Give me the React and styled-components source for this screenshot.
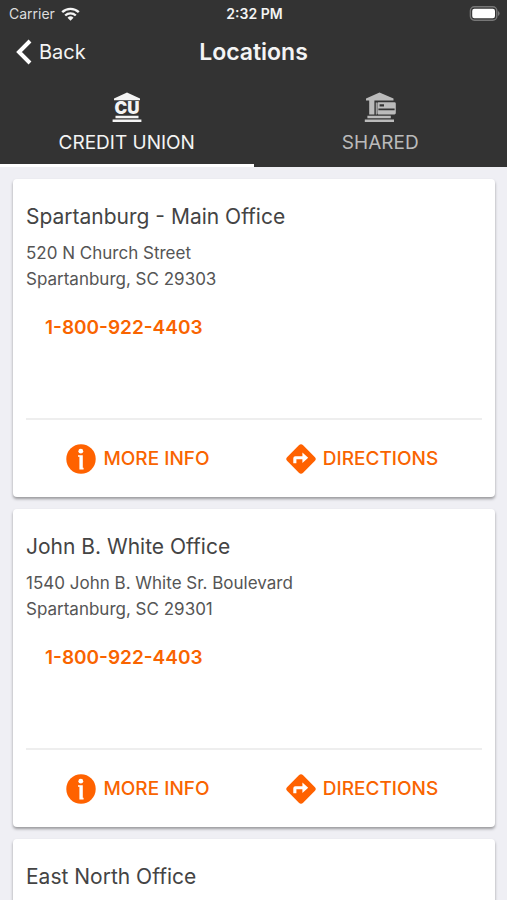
import React, { useState } from 'react'
import styled, { createGlobalStyle } from 'styled-components'

const GlobalStyle = createGlobalStyle`
	* {
		box-sizing: border-box;
	}

	body {
		margin: 0;
		background: #efeff4;
		color: #444;
		font-family: Inter, 'Liberation Sans', sans-serif;
	}

	button {
		border: none;
		padding: 0;
		background: none;
		color: inherit;
		font: inherit;
		cursor: pointer;
	}
`

const Screen = styled.div`
	display: flex;
	flex-direction: column;
	height: 100vh;
`

const Header = styled.header`
	flex: none;
	background: #333;
	color: #f4f4f4;
`

const StatusBar = styled.div`
	display: grid;
	grid-template-columns: 1fr auto 1fr;
	align-items: center;
	height: 27px;
	padding: 0 7px 0 9px;
	font-size: 14px;
`

const Carrier = styled.span`
	display: flex;
	align-items: center;
	gap: 6px;
	color: #ddd;
`

const Clock = styled.span`
	font-weight: 600;
`

const Battery = styled.svg`
	justify-self: end;
`

const NavBar = styled.div`
	display: grid;
	grid-template-columns: 1fr auto 1fr;
	align-items: center;
	height: 50px;
	padding: 0 16px;
`

const BackButton = styled.button`
	display: flex;
	align-items: center;
	justify-self: start;
	gap: 7px;
	font-size: 20px;
`

const Title = styled.h1`
	margin: 0;
	font-size: 23px;
	font-weight: 600;
	line-height: 28px;
`

const Tabs = styled.div`
	display: flex;
`

const Tab = styled.button`
	display: flex;
	flex: 1;
	flex-direction: column;
	align-items: center;
	gap: 7px;
	height: 90px;
	padding-top: 15px;
	border-bottom: 3px solid ${({ $active }) => ($active ? '#fff' : '#333')};
	color: ${({ $active }) => ($active ? '#f4f4f4' : '#bbb')};
	font-size: 19px;
	line-height: 26px;
`

const List = styled.main`
	display: flex;
	flex: 1;
	flex-direction: column;
	gap: 12px;
	padding: 12px 12px 12px 13px;
	overflow-y: auto;
	scrollbar-width: none;
`

const Card = styled.article`
	display: flex;
	flex: none;
	flex-direction: column;
	min-height: 318px;
	padding: 0 13px;
	border-radius: 4px;
	background: #fff;
	box-shadow: 0 2px 3px rgba(0, 0, 0, 0.36);
`

const Details = styled.div`
	flex: 1;
	padding-top: 24px;
`

const Name = styled.h2`
	margin: 0 0 9px;
	font-size: 21px;
	font-weight: 400;
	line-height: 28px;
`

const Address = styled.address`
	font-size: 17px;
	font-style: normal;
	line-height: 26px;
	color: #555;
`

const Phone = styled.a`
	display: inline-block;
	margin: 22px 0 0 19px;
	color: #f96400;
	font-size: 19px;
	font-weight: 600;
	line-height: 28px;
	text-decoration: none;
`

const Actions = styled.div`
	display: flex;
	height: 79px;
	padding-right: 8px;
	border-top: 2px solid #eee;
`

const Action = styled.button`
	display: flex;
	flex: 1;
	align-items: center;
	justify-content: center;
	gap: 7px;
	color: #f96400;
	font-size: 19px;
	font-weight: 500;
`

const WifiIcon = () => (
	<svg width="19" height="14" viewBox="0 0 19 14" aria-hidden="true">
		<g fill="none" stroke="#f4f4f4" strokeWidth="2.4">
			<path d="M1.2 5.2a12 12 0 0 1 16.6 0" />
			<path d="M4.2 8.5a7.7 7.7 0 0 1 10.6 0" />
		</g>
		<path fill="#f4f4f4" d="M6.5 10.7a4.4 4.4 0 0 1 6 0l-3 3z" />
	</svg>
)

const BatteryIcon = () => (
	<Battery width="31" height="15" viewBox="0 0 31 15" aria-label="Battery">
		<rect
			x="1.4"
			y="0.8"
			width="26.4"
			height="13.4"
			rx="4"
			fill="none"
			stroke="#777"
			strokeWidth="1.4"
		/>
		<rect x="3.2" y="2.8" width="22.8" height="9.4" rx="2.2" fill="#fff" />
		<path d="M29 5v5q1.6-.8 1.6-2.5T29 5z" fill="#777" />
	</Battery>
)

const ChevronIcon = () => (
	<svg width="16" height="26" viewBox="0 0 16 26" aria-hidden="true">
		<path
			d="M14 2 3 13l11 11"
			fill="none"
			stroke="#fff"
			strokeWidth="4"
			strokeLinejoin="miter"
		/>
	</svg>
)

const CreditUnionIcon = () => (
	<svg width="30" height="31" viewBox="0 0 30 31" aria-hidden="true">
		<g fill="currentColor">
			<path d="M15 .4 28 6.4v1.8H2V6.4z" />
			<text
				x="15"
				y="21.8"
				textAnchor="middle"
				fontFamily="Inter, sans-serif"
				fontSize="17"
				fontWeight="900"
			>
				CU
			</text>
			<path d="M3.5 23.8h23v2.4h-23zM.6 27.4h28.8v2.6H.6z" />
		</g>
	</svg>
)

const SharedIcon = () => (
	<svg width="34" height="31" viewBox="0 0 34 31" aria-hidden="true">
		<path
			fill="currentColor"
			fillRule="evenodd"
			d="M16.5.4 30.5 6.6v2H3v-2zM6.2 8.6h5.2v14H6.2zM12.8 10.6h1v12h-1zM15.2 10.2h16.2q1.4 0 1.4 1.4v9.4q0 1.4-1.4 1.4H15.2q-.8 0-.8-1.4v-9.4q0-1.4.8-1.4zM16.6 12.2v2.2h4.4v-2.2zM15.4 16.4v1.8h16.2v-1.8zM4.4 23.8h23.4v2.4H4.4zM1.8 27.4h29.2v2.6H1.8z"
		/>
	</svg>
)

const InfoIcon = () => (
	<svg width="30" height="30" viewBox="0 0 30 30" aria-hidden="true">
		<circle cx="15" cy="15" r="14.7" fill="#ff6200" />
		<circle cx="14.8" cy="7.2" r="2.4" fill="#fff" />
		<path fill="#fff" d="M12 11.2h4.8v12.6h.8v1.6h-4.2V12.8H12z" />
	</svg>
)

const DirectionsIcon = () => (
	<svg width="30" height="30" viewBox="0 0 30 30" aria-hidden="true">
		<path
			d="M15 3.4 26.6 15 15 26.6 3.4 15z"
			fill="#ff6200"
			stroke="#ff6200"
			strokeWidth="6"
			strokeLinejoin="round"
		/>
		<path
			fill="#fff"
			d="M7.3 19.3v-5.1q0-2 2-2h7.1V8.6l5.8 5.2-5.8 5.2v-3.8h-6v4.1z"
		/>
	</svg>
)

const tabs = [
	{ id: 'creditUnion', label: 'CREDIT UNION', Icon: CreditUnionIcon },
	{ id: 'shared', label: 'SHARED', Icon: SharedIcon }
]

const locations = [
	{
		name: 'Spartanburg - Main Office',
		address: ['520 N Church Street', 'Spartanburg, SC 29303'],
		phone: '1-800-922-4403'
	},
	{
		name: 'John B. White Office',
		address: ['1540 John B. White Sr. Boulevard', 'Spartanburg, SC 29301'],
		phone: '1-800-922-4403'
	},
	{ name: 'East North Office' }
]

function LocationCard({ name, address, phone }) {
	return (
		<Card>
			<Details>
				<Name>{name}</Name>
				{address && (
					<Address>
						{address.map(line => (
							<div key={line}>{line}</div>
						))}
					</Address>
				)}
				{phone && <Phone href={`tel:${phone}`}>{phone}</Phone>}
			</Details>
			{address && (
				<Actions>
					<Action type="button">
						<InfoIcon />
						MORE INFO
					</Action>
					<Action type="button">
						<DirectionsIcon />
						DIRECTIONS
					</Action>
				</Actions>
			)}
		</Card>
	)
}

export default function App() {
	const [activeTab, setActiveTab] = useState('creditUnion')

	return (
		<>
			<GlobalStyle />
			<Screen>
				<Header>
					<StatusBar>
						<Carrier>
							Carrier
							<WifiIcon />
						</Carrier>
						<Clock>2:32 PM</Clock>
						<BatteryIcon />
					</StatusBar>
					<NavBar>
						<BackButton type="button">
							<ChevronIcon />
							Back
						</BackButton>
						<Title>Locations</Title>
					</NavBar>
					<Tabs role="tablist">
						{tabs.map(({ id, label, Icon }) => (
							<Tab
								key={id}
								type="button"
								role="tab"
								aria-selected={id === activeTab}
								$active={id === activeTab}
								onClick={() => setActiveTab(id)}
							>
								<Icon />
								{label}
							</Tab>
						))}
					</Tabs>
				</Header>
				<List>
					{locations.map(location => (
						<LocationCard key={location.name} {...location} />
					))}
				</List>
			</Screen>
		</>
	)
}
